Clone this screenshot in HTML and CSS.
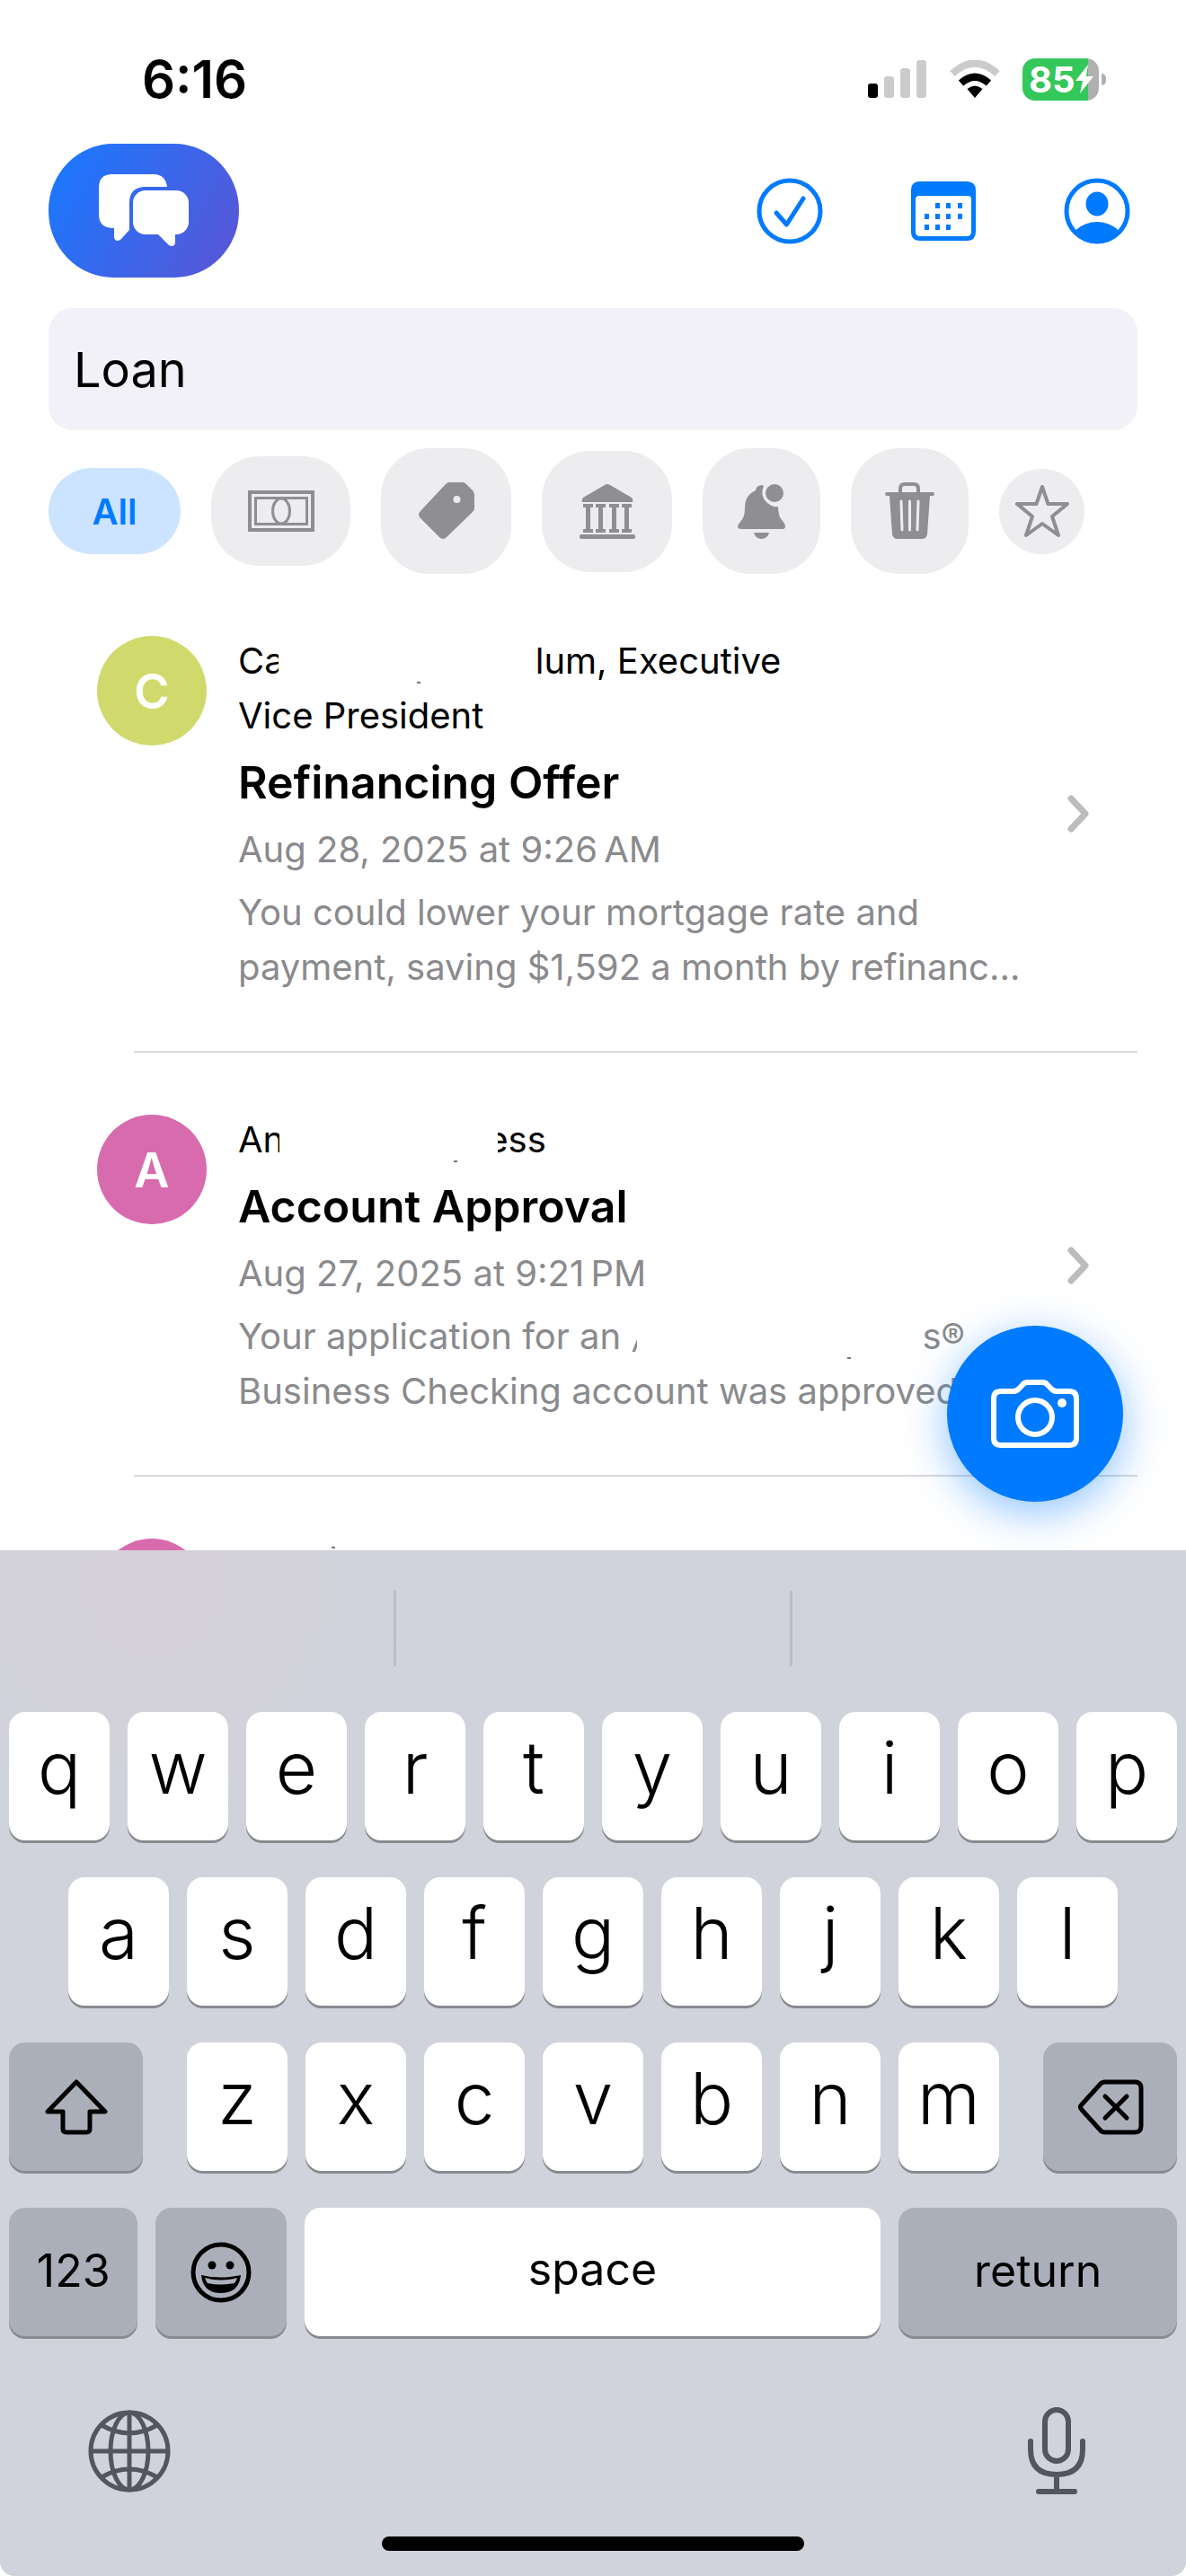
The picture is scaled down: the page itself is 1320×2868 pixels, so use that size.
FILE: index.html
```html
<!DOCTYPE html>
<html lang="en">
<head>
    <meta charset="UTF-8">
    <meta name="viewport" content="width=device-width, initial-scale=1.0">
    <title>Messages</title>
    <link rel="stylesheet" href="styles.css">
</head>
<body>
    <div class="app">
        <div class="status-bar">
            <span class="time">6:16</span>
            <div class="status-icons">
                <svg width="65" height="42" viewBox="0 0 65 42">
                    <rect x="0" y="26" width="11" height="16" rx="3"/>
                    <g fill="#cbcbcb">
                        <rect x="18" y="18" width="11" height="24" rx="3"/>
                        <rect x="36" y="9" width="11" height="33" rx="3"/>
                        <rect x="54" y="0" width="11" height="42" rx="3"/>
                    </g>
                </svg>
                <svg class="wifi" width="56" height="42" viewBox="0 0 56 42">
                    <path d="M28 42 L19.500 32 Q28 25 36.500 32 Z"/>
                    <path d="M12.500 25.500 Q28 12 43.500 25.500" fill="none" stroke="#000" stroke-width="8"/>
                    <path d="M3 15 Q28 -8 53 15" fill="none" stroke="#cbcbcb" stroke-width="8"/>
                </svg>
                <div class="battery">
                    <span class="battery-level">85</span>
                    <svg width="20" height="32" viewBox="0 0 20 32" fill="#fff"><path d="M14 0 L0 18 H8 L5 32 L20 13 H12 Z"/></svg>
                </div>
            </div>
        </div>

        <header class="header">
            <button class="logo" type="button" aria-label="Messages">
                <svg width="100" height="82" viewBox="0 0 100 82" fill="#fff">
                    <path d="M15 0 H61 Q74 0 76 14 H52 Q34 14 34 32 V62 L24 73 Q18 76 17 70 V60 H15 Q0 59 0 45 V15 Q0 0 15 0 Z"/>
                    <rect x="38" y="18" width="62" height="49" rx="14"/>
                    <path d="M65 66 L78 79 Q84 82 85 76 V66 Z"/>
                </svg>
            </button>
            <nav class="header-icons">
                <button type="button" aria-label="Tasks">
                    <svg width="74" height="74" viewBox="0 0 74 74" fill="none" stroke="#007aff" stroke-width="5" stroke-linecap="round" stroke-linejoin="round">
                        <circle cx="37" cy="37" r="34"/>
                        <path d="M22 39 L33.500 52 L52 23"/>
                    </svg>
                </button>
                <button type="button" aria-label="Calendar">
                    <svg width="72" height="66" viewBox="0 0 72 66" fill="#007aff">
                        <path fill-rule="evenodd" d="M10 0 H62 Q72 0 72 10 V56 Q72 66 62 66 H10 Q0 66 0 56 V10 Q0 0 10 0 Z M9 16 Q5 16 5 20 V56 Q5 61 10 61 H62 Q67 61 67 56 V20 Q67 16 63 16 Z"/>
                        <path d="M27 24h5v6h-5z M39 24h5v6h-5z M52 24h5v6h-5z M15 36h5v6h-5z M27 36h5v6h-5z M39 36h5v6h-5z M52 36h5v6h-5z M15 48h5v6h-5z M27 48h5v6h-5z M39 48h5v6h-5z"/>
                    </svg>
                </button>
                <button type="button" aria-label="Profile">
                    <svg width="74" height="74" viewBox="0 0 74 74" fill="#007aff">
                        <defs><clipPath id="profile-clip"><circle cx="37" cy="37" r="36"/></clipPath></defs>
                        <circle cx="37" cy="37" r="34" fill="none" stroke="#007aff" stroke-width="5"/>
                        <ellipse cx="37" cy="29" rx="12.500" ry="13.500"/>
                        <ellipse cx="37" cy="77" rx="32" ry="28" clip-path="url(#profile-clip)"/>
                    </svg>
                </button>
            </nav>
        </header>

        <input class="search" type="text" value="Loan" aria-label="Search">

        <div class="filters">
            <button class="filter filter-all" type="button">All</button>
            <button class="filter filter-cash" type="button" aria-label="Payments">
                <svg width="74" height="46" viewBox="0 0 74 46" fill="none" stroke="#8e8e93">
                    <rect x="2" y="2" width="70" height="42" stroke-width="4"/>
                    <rect x="8.500" y="8.500" width="57" height="29" stroke-width="3"/>
                    <ellipse cx="37" cy="23" rx="9.500" ry="14" stroke-width="3"/>
                </svg>
            </button>
            <button class="filter filter-tag" type="button" aria-label="Tags">
                <svg width="62" height="64" viewBox="0 0 62 64" fill="#8e8e93">
                    <path fill-rule="evenodd" d="M34 0 H49 Q51 0 53 2 L60 9 Q62 11 62 14 V28 Q62 31 60 33 L31 61 Q27 65 23 61 L2 40 Q-2 36 2 32 L30 2 Q32 0 34 0 Z M42.500 15 A4 4 0 1 0 42.500 23 A4 4 0 1 0 42.500 15 Z"/>
                </svg>
            </button>
            <button class="filter filter-bank" type="button" aria-label="Bank">
                <svg width="62" height="61" viewBox="0 0 62 61" fill="#8e8e93">
                    <path d="M28 1 Q31 -1 34 1 L58 15 Q60 17 59 20 H3 Q2 17 4 15 Z"/>
                    <path d="M4 22h11v4h-3v24h3v4h-11v-4h3v-24h-3z M18 22h11v4h-3v24h3v4h-11v-4h3v-24h-3z M33 22h11v4h-3v24h3v4h-11v-4h3v-24h-3z M47 22h11v4h-3v24h3v4h-11v-4h3v-24h-3z"/>
                    <rect x="0" y="56" width="62" height="5" rx="2"/>
                </svg>
            </button>
            <button class="filter filter-bell" type="button" aria-label="Alerts">
                <svg width="54" height="61" viewBox="0 0 54 61" fill="#8e8e93">
                    <path d="M27 1 Q21 1 20 7 Q8 12 8 27 Q8 37 3 42 Q0 45 0 48 Q1 50 4 50 H50 Q53 50 53 47 Q53 44 50 41 Q45 36 45 25 Q39 26 33 21 Q24 13 29 2 Z"/>
                    <circle cx="41" cy="10" r="10"/>
                    <path d="M18 54 H35 Q33 61 26.500 61 Q20 61 18 54 Z"/>
                </svg>
            </button>
            <button class="filter filter-trash" type="button" aria-label="Trash">
                <svg width="55" height="64" viewBox="0 0 55 64">
                    <path d="M17 12 V7 Q17 2 22 2 H32 Q37 2 37 7 V12" fill="none" stroke="#8e8e93" stroke-width="4"/>
                    <path fill="#8e8e93" d="M2 11 H53 Q55 11 55 13 Q55 15 53 15 H50 L47 58 Q46 63 41 63 H14 Q9 63 8 58 L5 15 H2 Q0 15 0 13 Q0 11 2 11 Z"/>
                    <path d="M18 21 L19 53 M27.500 21 V53 M37 21 L36 53" stroke="#ededef" stroke-width="3" stroke-linecap="round"/>
                </svg>
            </button>
            <button class="filter filter-star" type="button" aria-label="Favorites">
                <svg width="60" height="60" viewBox="0 0 60 60" fill="none" stroke="#8e8e93" stroke-width="4" stroke-linejoin="round">
                    <path d="M30 3 L36.500 22 H58 L41 36 L48 57 L30 44 L12 57 L19 36 L2 22 H23.500 Z"/>
                </svg>
            </button>
        </div>

        <main class="messages">
            <ul class="message-list">
                <li class="message">
                    <span class="avatar avatar-lime">C</span>
                    <div class="message-body">
                        <div class="sender">Ca<span class="redacted redacted-name-1"></span>lum, Executive<br>Vice President</div>
                        <h2 class="subject">Refinancing Offer</h2>
                        <div class="date">Aug 28, 2025 at 9:26&#8239;AM</div>
                        <p class="preview">You could lower your mortgage rate and payment, saving $1,592 a month by refinanc...</p>
                    </div>
                    <svg class="chevron" width="24" height="42" viewBox="0 0 24 42"><path d="M4 4 L20 21 L4 38"/></svg>
                </li>
                <li class="message">
                    <span class="avatar avatar-pink">A</span>
                    <div class="message-body">
                        <div class="sender">An<span class="redacted redacted-name-2"></span>ess</div>
                        <h2 class="subject">Account Approval</h2>
                        <div class="date">Aug 27, 2025 at 9:21&#8239;PM</div>
                        <p class="preview">Your application for an <span class="redacted redacted-bank"></span>s®<br>Business Checking account was approved</p>
                    </div>
                    <svg class="chevron" width="24" height="42" viewBox="0 0 24 42"><path d="M4 4 L20 21 L4 38"/></svg>
                </li>
                <li class="message">
                    <span class="avatar avatar-pink"></span>
                    <div class="message-body">
                        <div class="sender"><span class="redacted redacted-name-3"></span></div>
                    </div>
                </li>
            </ul>
            <button class="camera-button" type="button" aria-label="Camera">
                <svg width="98" height="76" viewBox="0 0 98 76" fill="none" stroke="#fff" stroke-width="6" stroke-linejoin="round">
                    <path d="M11 13 H25 Q29 13 32 9 L35 6 Q37 3 41 3 H57 Q61 3 63 6 L66 9 Q69 13 73 13 H87 Q95 13 95 21 V65 Q95 73 87 73 H11 Q3 73 3 65 V21 Q3 13 11 13 Z"/>
                    <circle cx="49" cy="42" r="19"/>
                    <circle cx="79" cy="26" r="5" fill="#fff" stroke="none"/>
                </svg>
            </button>
        </main>

        <div class="keyboard">
            <div class="suggestions"><span></span><span></span><span></span></div>
            <div class="keys">
                <div class="key-row">
                    <button class="key" type="button">q</button>
                    <button class="key" type="button">w</button>
                    <button class="key" type="button">e</button>
                    <button class="key" type="button">r</button>
                    <button class="key" type="button">t</button>
                    <button class="key" type="button">y</button>
                    <button class="key" type="button">u</button>
                    <button class="key" type="button">i</button>
                    <button class="key" type="button">o</button>
                    <button class="key" type="button">p</button>
                </div>
                <div class="key-row key-row-inset">
                    <button class="key" type="button">a</button>
                    <button class="key" type="button">s</button>
                    <button class="key" type="button">d</button>
                    <button class="key" type="button">f</button>
                    <button class="key" type="button">g</button>
                    <button class="key" type="button">h</button>
                    <button class="key" type="button">j</button>
                    <button class="key" type="button">k</button>
                    <button class="key" type="button">l</button>
                </div>
                <div class="key-row key-row-shift">
                    <button class="key key-dark key-shift" type="button" aria-label="Shift">
                        <svg width="70" height="62" viewBox="0 0 70 62" fill="none" stroke="#000" stroke-width="5" stroke-linejoin="round">
                            <path d="M35 3 L67 36 H50 V55 Q50 59 46 59 H24 Q20 59 20 55 V36 H3 Z"/>
                        </svg>
                    </button>
                    <div class="key-group">
                        <button class="key" type="button">z</button>
                        <button class="key" type="button">x</button>
                        <button class="key" type="button">c</button>
                        <button class="key" type="button">v</button>
                        <button class="key" type="button">b</button>
                        <button class="key" type="button">n</button>
                        <button class="key" type="button">m</button>
                    </div>
                    <button class="key key-dark key-shift" type="button" aria-label="Delete">
                        <svg width="74" height="62" viewBox="0 0 74 62" fill="none" stroke="#000" stroke-width="5" stroke-linejoin="round" stroke-linecap="round">
                            <path d="M31 3 H64 Q71 3 71 10 V52 Q71 59 64 59 H31 Q27 59 25 56 L5 34 Q2 31 5 28 L25 6 Q27 3 31 3 Z"/>
                            <path d="M31 19 L55 43 M55 19 L31 43"/>
                        </svg>
                    </button>
                </div>
                <div class="key-row">
                    <button class="key key-dark key-word key-numbers" type="button">123</button>
                    <button class="key key-dark key-emoji" type="button" aria-label="Emoji">
                        <svg width="68" height="68" viewBox="0 0 68 68">
                            <circle cx="34" cy="34" r="31" fill="none" stroke="#000" stroke-width="5"/>
                            <circle cx="24" cy="26" r="4.500"/>
                            <circle cx="44" cy="26" r="4.500"/>
                            <path d="M12 37 Q34 42 56 37 Q54 57 34 57 Q14 57 12 37 Z"/>
                            <path d="M16 40 Q34 45 52 40 Q51 43 49 46 Q34 49 19 46 Q17 43 16 40 Z" fill="#abafba"/>
                        </svg>
                    </button>
                    <button class="key key-word key-space" type="button">space</button>
                    <button class="key key-dark key-word key-return" type="button">return</button>
                </div>
            </div>
            <div class="keyboard-footer">
                <button type="button" aria-label="Next keyboard">
                    <svg width="92" height="92" viewBox="0 0 92 92" fill="none" stroke="#53565e" stroke-width="5">
                        <circle cx="46" cy="46" r="43"/>
                        <ellipse cx="46" cy="46" rx="21" ry="43"/>
                        <path d="M46 3 V89 M3 46 H89 M15 17 Q46 35 77 17 M15 75 Q46 57 77 75"/>
                    </svg>
                </button>
                <button type="button" aria-label="Dictate">
                    <svg width="64" height="97" viewBox="0 0 64 97" fill="none" stroke="#53565e" stroke-width="6" stroke-linecap="round">
                        <rect x="19" y="3" width="26" height="57" rx="13"/>
                        <path d="M3 38 V47 Q3 75 32 75 Q61 75 61 47 V38 M32 76 V94 M12 94 H52"/>
                    </svg>
                </button>
            </div>
            <div class="home-indicator"></div>
        </div>
    </div>
</body>
</html>
```

FILE: styles.css
```css
* {
    box-sizing: border-box;
}
body {
    margin: 0;
    background-color: #fff;
    color: #000;
    font-family: Inter, "Liberation Sans", sans-serif;
    font-size: 40px;
}
button {
    display: flex;
    align-items: center;
    justify-content: center;
    margin: 0;
    padding: 0;
    border: none;
    background: none;
    color: inherit;
    font: inherit;
    cursor: pointer;
}
svg {
    display: block;
    flex-shrink: 0;
}
.app {
    display: flex;
    flex-direction: column;
    height: 100vh;
    overflow: hidden;
}

/* Status bar */
.status-bar {
    display: flex;
    align-items: center;
    justify-content: space-between;
    height: 160px;
    padding: 16px 89px 0 158px;
}
.time {
    font-size: 58px;
    font-weight: 600;
}
.status-icons {
    display: flex;
    align-items: center;
}
.wifi {
    margin: 0 25px 0 26px;
}
.battery {
    position: relative;
    display: flex;
    align-items: center;
    width: 85px;
    height: 47px;
    margin-right: 8px;
    padding-left: 7px;
    border-radius: 14px;
    background: linear-gradient(to right, #34c759 73px, #b0b0b0 73px);
}
.battery::after {
    content: "";
    position: absolute;
    top: 17px;
    right: -8px;
    width: 5px;
    height: 13px;
    border-radius: 0 5px 5px 0;
    background-color: #b0b0b0;
}
.battery-level {
    color: #fff;
    font-size: 40px;
    font-weight: 700;
}

/* Header */
.header {
    display: flex;
    align-items: center;
    justify-content: space-between;
    padding: 0 62px 0 54px;
}
.logo {
    width: 212px;
    height: 149px;
    border-radius: 72px / 74px;
    background: linear-gradient(120deg, #1a78ff 5%, #5856d6 95%);
}
.header-icons {
    display: flex;
    align-items: center;
    gap: 98px;
}
.search {
    height: 136px;
    margin: 34px 54px 20px;
    padding: 0 28px;
    border: none;
    border-radius: 27px;
    background-color: #f2f1f8;
    color: #000;
    font: inherit;
    font-size: 54px;
    outline: none;
}

/* Filters */
.filters {
    display: flex;
    align-items: center;
    gap: 34px;
    padding: 0 54px;
}
.filter {
    width: 145px;
    height: 140px;
    border-radius: 54px;
    background-color: #ededef;
}
.filter-all {
    width: 147px;
    height: 96px;
    background-color: #cce4ff;
    color: #007aff;
    font-weight: 600;
}
.filter-cash {
    width: 155px;
    height: 122px;
}
.filter-bank {
    height: 135px;
}
.filter-bell,
.filter-trash {
    width: 131px;
}
.filter-star {
    width: 95px;
    height: 95px;
}

/* Message list */
.messages {
    position: relative;
    flex: 1;
    min-height: 0;
}
.message-list {
    height: 100%;
    margin: 0;
    padding: 0;
    overflow: hidden;
    list-style: none;
}
.message {
    position: relative;
    display: flex;
    padding: 66px 108px 65px;
}
.message::after {
    content: "";
    position: absolute;
    right: 54px;
    bottom: 0;
    left: 149px;
    height: 2px;
    background-color: #d9d9dc;
}
.avatar {
    display: flex;
    align-items: center;
    justify-content: center;
    flex-shrink: 0;
    width: 122px;
    height: 122px;
    margin: 3px 35px 0 0;
    border-radius: 50%;
    color: #fff;
    font-size: 54px;
    font-weight: 600;
}
.avatar-lime {
    background-color: #d0da6c;
}
.avatar-pink {
    background-color: #d86bae;
}
.message-body {
    flex: 1;
    display: flex;
    flex-direction: column;
    gap: 9px;
    line-height: 61px;
}
.subject {
    margin: 0;
    font-size: 50px;
    font-weight: 600;
    line-height: 70px;
}
.date,
.preview {
    margin: 0;
    color: #8a8a8d;
}
.chevron {
    align-self: center;
    fill: none;
    stroke: #bcbcbc;
    stroke-width: 7px;
    stroke-linecap: round;
    stroke-linejoin: round;
}

/* White patches over hidden names, each with a speck of a descender left */
.redacted {
    position: relative;
    display: inline-block;
    height: 44px;
    background-color: #fff;
    vertical-align: middle;
}
.redacted::after {
    content: "";
    position: absolute;
    bottom: 0;
    width: 4px;
    height: 2px;
    background-color: #777;
}
.redacted-name-1 {
    width: 286px;
    margin-left: -7px;
}
.redacted-name-1::after {
    left: 154px;
}
.redacted-name-2 {
    width: 243px;
    margin: 0 -12px 0 -5px;
}
.redacted-name-2::after {
    left: 194px;
}
.redacted-name-3 {
    width: 340px;
}
.redacted-name-3::after {
    top: 0;
    left: 104px;
}
.redacted-bank {
    width: 324px;
}
.redacted-bank::before {
    content: "";
    position: absolute;
    bottom: 8px;
    left: 1px;
    width: 6px;
    height: 15px;
    background-color: #8a8a8d;
    clip-path: polygon(0 100%, 60% 100%, 100% 50%, 100% 0);
}
.redacted-bank::after {
    left: 241px;
}

.camera-button {
    position: absolute;
    right: 70px;
    bottom: 54px;
    width: 196px;
    height: 196px;
    border-radius: 50%;
    background-color: #007aff;
    box-shadow: 0 12px 48px rgba(0, 122, 255, 0.45);
}

/* Keyboard */
.keyboard {
    position: relative;
    flex-shrink: 0;
    border-radius: 0 0 16px 16px;
    background: radial-gradient(circle at 170px 40px, #d5d0d9, rgba(209, 211, 219, 0) 300px), #d0d3dc;
}
.suggestions {
    display: flex;
    padding: 45px 0 51px;
}
.suggestions span {
    flex: 1;
    height: 84px;
}
.suggestions span + span {
    border-left: 3px solid #bcbec6;
}
.keys {
    display: flex;
    flex-direction: column;
    gap: 41px;
    padding: 0 10px;
}
.key-row,
.key-group {
    display: flex;
    gap: 20px;
}
.key-row-inset {
    padding: 0 66px;
}
.key-row-shift {
    gap: 49px;
}
.key-group {
    flex: 904 1 0;
}
.key {
    flex: 1 1 0;
    height: 143px;
    padding-bottom: 20px;
    border-radius: 18px;
    background-color: #fff;
    box-shadow: 0 3px 0 #888a8f;
    font-size: 80px;
    font-weight: 350;
}
.key-dark {
    padding-bottom: 0;
    background-color: #abafba;
}
.key-word {
    padding-bottom: 4px;
    font-size: 50px;
    font-weight: 400;
}
.key-shift {
    flex: 149 1 0;
}
.key-numbers {
    flex: 143 1 0;
}
.key-emoji {
    flex: 145 1 0;
}
.key-space {
    flex: 640 1 0;
    padding-bottom: 8px;
}
.key-return {
    flex: 309 1 0;
}
.keyboard-footer {
    display: flex;
    align-items: center;
    justify-content: space-between;
    padding: 79px 112px 47px 98px;
}
.home-indicator {
    width: 470px;
    height: 16px;
    margin: 0 auto;
    border-radius: 8px;
    background-color: #000;
}
.keyboard::after {
    content: "";
    display: block;
    height: 28px;
}
```
